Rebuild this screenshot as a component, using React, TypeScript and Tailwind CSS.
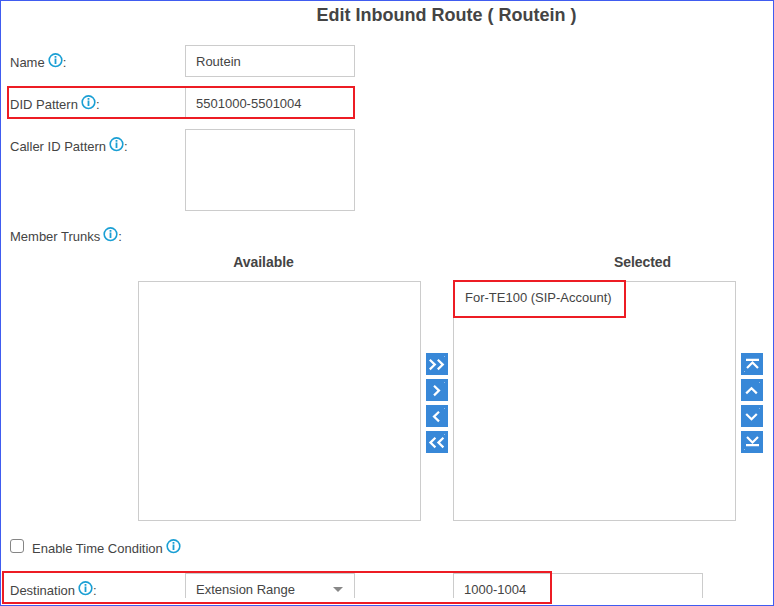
import type { ReactNode } from "react";

function InfoIcon() {
  return (
    <svg viewBox="0 0 15 15" className="ml-[3px] block h-[15px] w-[15px] shrink-0 -translate-y-0.5">
      <circle cx="7.5" cy="7.2" r="6.3" fill="none" stroke="#1a9fd4" strokeWidth="1.6" />
      <path d="M7.5 3v1.7M7.5 5.6V11" stroke="#1a9fd4" strokeWidth="1.8" fill="none" />
    </svg>
  );
}

function Label({ children, className = "" }: { children: ReactNode; className?: string }) {
  return (
    <div className={`flex h-4 w-[175px] shrink-0 items-start leading-4 ${className}`}>
      <span>{children}</span>
      <InfoIcon />
      <span>:</span>
    </div>
  );
}

function IconButton({ d, speck }: { d: string; speck: "top" | "bottom" }) {
  return (
    <button type="button" className="block h-[22px] w-[22px] bg-[#3888d8]">
      <svg viewBox="0 0 22 22" className="block h-[22px] w-[22px]">
        <path d={d} fill="none" stroke="#fff" strokeWidth="2.2" />
        <rect x={speck === "top" ? 18 : 3} y={speck === "top" ? 3 : 18} width="1" height="1" fill="#8fbce9" />
      </svg>
    </button>
  );
}

const field = "border border-[#cccccc] bg-white pl-2.5 text-[13px]";

export default function App() {
  return (
    <div className="relative h-[606px] w-[774px] overflow-hidden border border-[#405cf0] bg-white font-['Liberation_Sans',Arial,sans-serif] text-[13px] text-[#444444]">
      <h1 className="ml-[119px] h-11 pt-0.5 text-center text-[18px] leading-6 font-bold">Edit Inbound Route ( Routein )</h1>

      <div className="flex flex-col gap-2.5 pl-[9px]">
        <div className="flex h-8">
          <Label className="mt-2.5">Name</Label>
          <div className={`${field} w-[170px] leading-8`}>Routein</div>
        </div>
        <div className="flex h-8">
          <Label className="mt-2.5">DID Pattern</Label>
          <div className={`${field} w-[170px] leading-8`}>5501000-5501004</div>
        </div>
        <div className="flex h-[82px]">
          <Label className="mt-2.5">Caller ID Pattern</Label>
          <div className={`${field} w-[170px]`} />
        </div>
      </div>

      <Label className="mt-[18px] ml-[9px]">Member Trunks</Label>

      <div className="mt-[9px] flex pl-[137px]">
        <div className="w-[283px]">
          <h2 className="h-[27px] pr-8 text-center text-[14px] leading-4 font-bold tracking-[-0.05px]">Available</h2>
          <div className="h-60 border border-[#cccccc]" />
        </div>
        <div className="flex w-8 flex-col items-center gap-1 pt-[99px]">
          <IconButton speck="top" d="M3.8 6.8l5 4.8-5 4.8M11.8 6.8l5 4.8-5 4.8" />
          <IconButton speck="top" d="M8 6.8l5 4.8-5 4.8" />
          <IconButton speck="top" d="M13 6.8l-5 4.8 5 4.8" />
          <IconButton speck="top" d="M9.4 6.8l-5 4.8 5 4.8M17.4 6.8l-5 4.8 5 4.8" />
        </div>
        <div className="w-[283px]">
          <h2 className="h-[27px] pl-24 text-center text-[14px] leading-4 font-bold tracking-[-0.1px]">Selected</h2>
          <div className="h-60 border border-[#cccccc] pt-2 pl-[11px] leading-4">For-TE100 (SIP-Account)</div>
        </div>
        <div className="flex w-8 flex-col items-center gap-1 pt-[99px]">
          <IconButton speck="bottom" d="M5 6.9h13M6 15l5.5-5.5 5.5 5.5" />
          <IconButton speck="top" d="M5.2 14.4l5.3-5.2 5.3 5.2" />
          <IconButton speck="top" d="M5.2 9l5.3 5.2 5.3-5.2" />
          <IconButton speck="bottom" d="M5 14.1h13M6 6l5.5 5.5 5.5-5.5" />
        </div>
      </div>

      <div className="mt-[18px] ml-[9px] flex h-4">
        <div className="h-3.5 w-3.5 rounded-[3px] border-[1.5px] border-[#858585]" />
        <div className="mt-0.5 ml-2 flex h-4 items-start leading-4">
          <span>Enable Time Condition</span>
          <InfoIcon />
        </div>
      </div>

      <div className="mt-[18px] ml-[9px] flex h-[25px] overflow-hidden">
        <Label className="mt-2.5">Destination</Label>
        <div className={`${field} flex h-8 w-[170px] justify-between pr-[11px] leading-8`}>
          <span>Extension Range</span>
          <svg viewBox="0 0 10 5" className="mt-[13px] h-[5px] w-2.5">
            <path d="M0 0h10L5 5z" fill="#888888" />
          </svg>
        </div>
        <div className={`${field} ml-[98px] h-8 w-[250px] leading-8`}>1000-1004</div>
      </div>

      <div className="absolute top-[85px] left-1.5 h-[33px] w-[348px] border-2 border-[#ed1c24]" />
      <div className="absolute top-[279px] left-[452px] h-[38px] w-[173px] border-2 border-[#ed1c24]" />
      <div className="absolute top-[570px] left-px h-[33px] w-[550px] border-2 border-[#ed1c24]" />
    </div>
  );
}
